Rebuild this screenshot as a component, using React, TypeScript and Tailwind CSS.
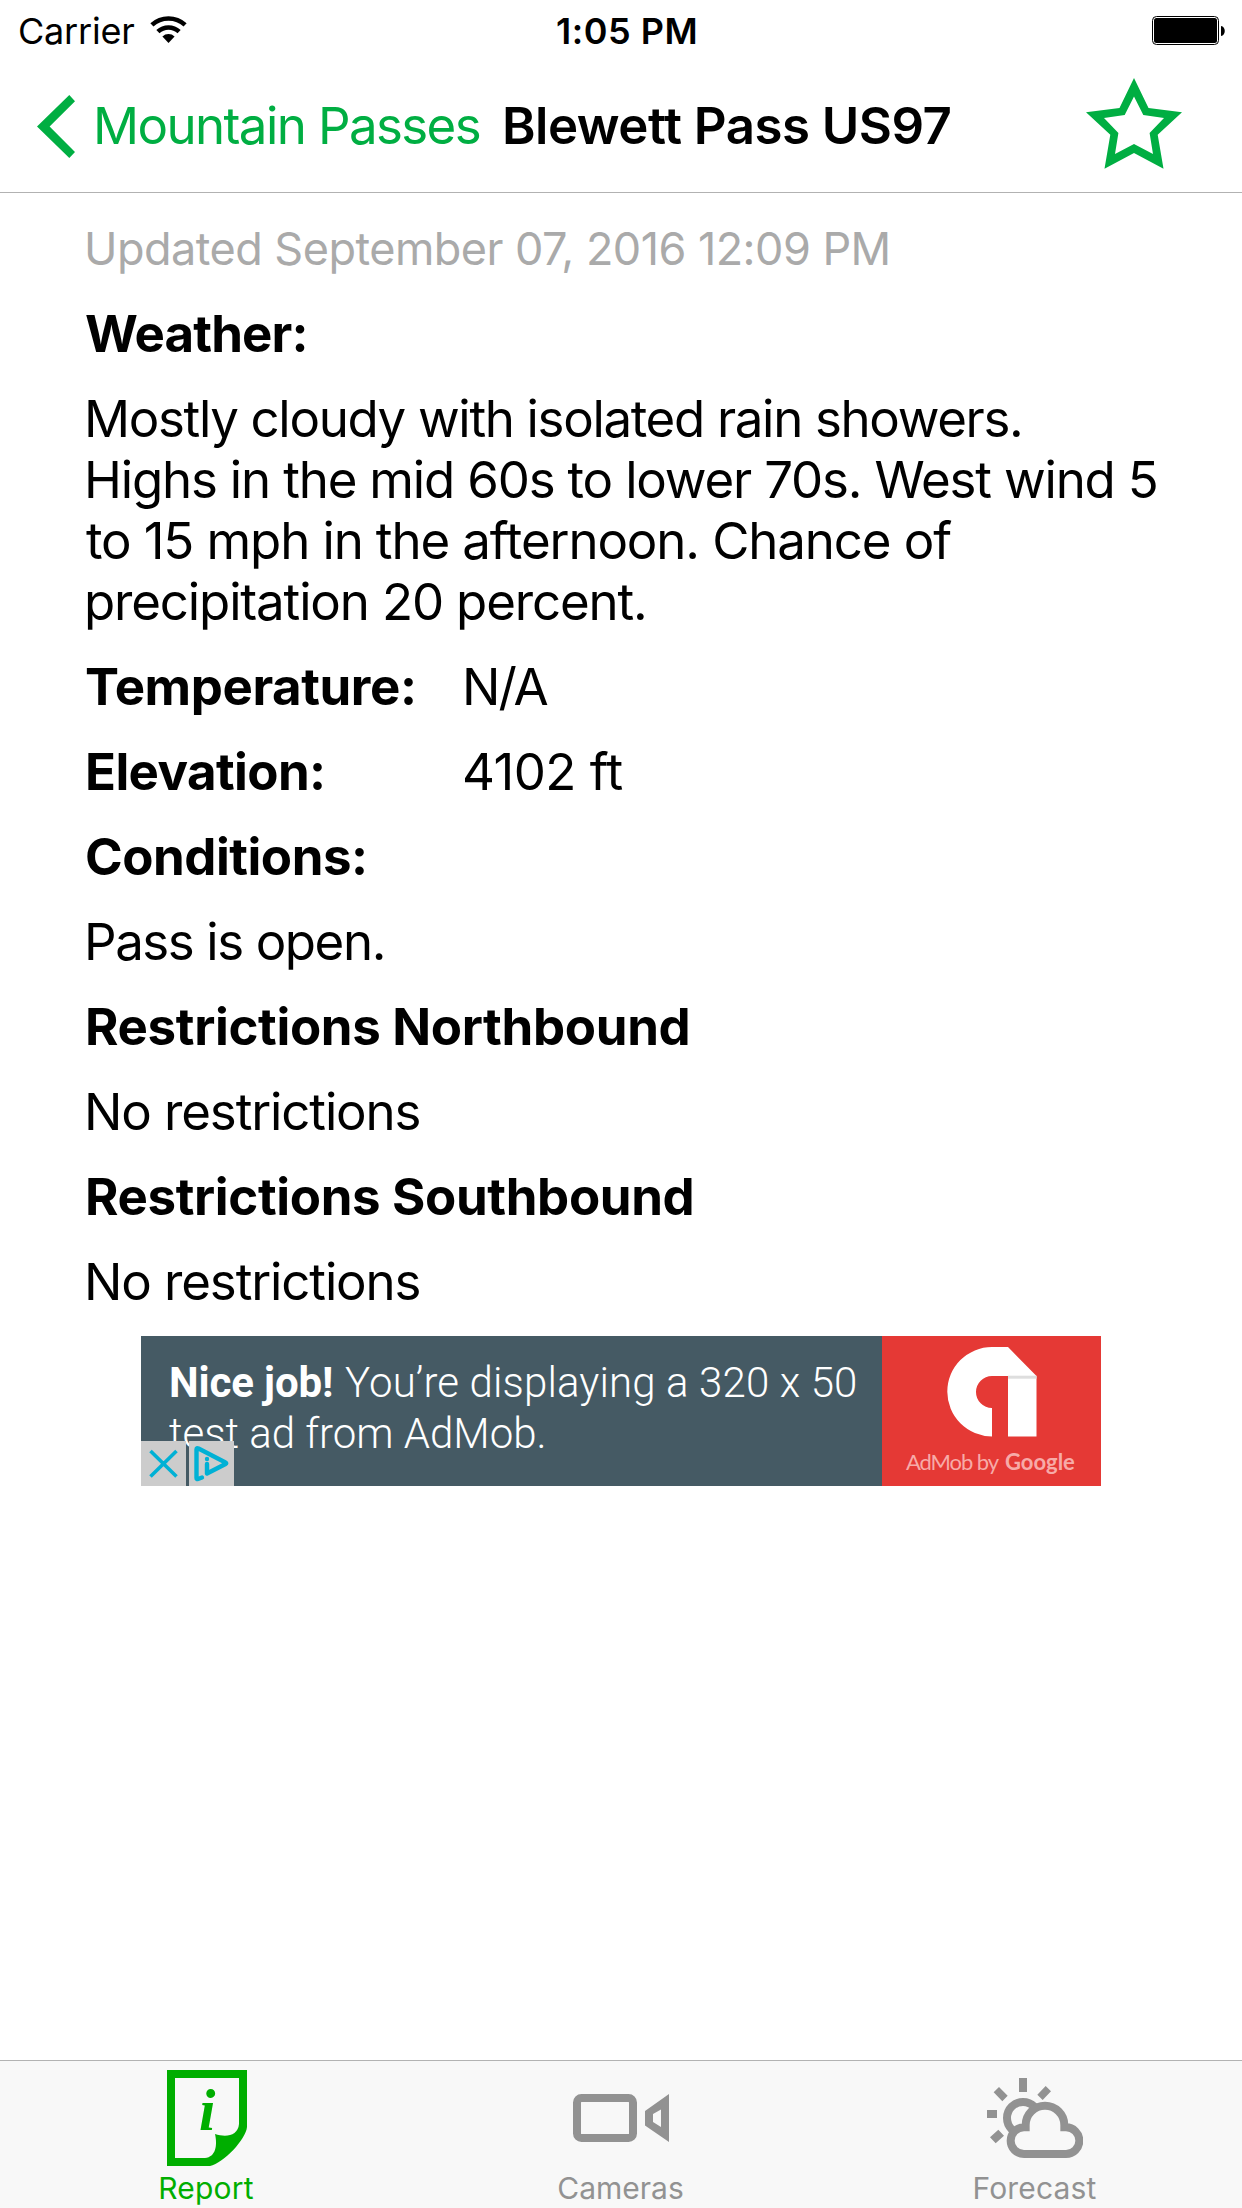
import type { ReactNode } from "react";

function WifiIcon() {
  return (
    <svg className="mt-4 h-[27px] w-[37px]" viewBox="0 0 37 27" fill="none" stroke="#000" strokeWidth="4.6">
      <path d="M1.9 8.9A24.6 24.6 0 0 1 35.1 8.9" />
      <path d="M7.9 15.6A15.6 15.6 0 0 1 29.1 15.6" />
      <path d="M18.5 27L12.4 20.4A9 9 0 0 1 24.6 20.4Z" fill="#000" stroke="none" />
    </svg>
  );
}

function StatusBar() {
  return (
    <div className="flex h-[62px] text-[36px] leading-[62px]">
      <div className="flex w-[556px] pl-[18px]">
        <span className="w-[132px] tracking-[-0.2px]">Carrier</span>
        <WifiIcon />
      </div>
      <span className="w-[596px] font-semibold tracking-[0.5px]">1:05 PM</span>
      <svg className="mt-4 h-[29px] w-[74px]" viewBox="0 0 74 29">
        <rect x="0.5" y="0.5" width="66" height="28" rx="4" fill="none" stroke="#000" />
        <rect x="2" y="2" width="63" height="25" rx="2.5" />
        <path d="M69 10C74 10.500 74 19.500 69 20Z" />
      </svg>
    </div>
  );
}

function NavBar() {
  return (
    <div className="flex h-[131px] border-b border-[#b2b2b2] text-[51px] leading-[127px] whitespace-nowrap">
      <svg className="mt-[33px] ml-[37px] h-[63px] w-[38px]" viewBox="0 0 38 63" fill="#00ae42">
        <path d="M32.300 0L38 6.200L12.600 31.500L38 57L32.300 63L0 31.500Z" />
      </svg>
      <span className="ml-[18px] w-[409px] tracking-[-1.6px] text-[#00ae42]">Mountain Passes</span>
      <span className="w-[584px] font-semibold tracking-[-0.51px]">Blewett Pass US97</span>
      <svg className="mt-4 h-[91px] w-[96px]" viewBox="1086 78 96 91">
        <path
          fill="#00ae42"
          fillRule="evenodd"
          d="M1134 78L1148.500 108L1182 112.300L1157.700 134.700L1163.500 168.700L1134 153L1104.500 168.700L1110.300 134.700L1086 112.300L1119.500 108ZM1134 96.500L1124.700 115L1104 118L1118.400 133L1115 154L1134 144L1153 154L1149.600 133L1164 118L1143.300 115Z"
        />
      </svg>
    </div>
  );
}

function Row({ children }: { children: ReactNode }) {
  return <div className="flex h-[85px] text-[51px] leading-[85px] whitespace-nowrap">{children}</div>;
}

function Report() {
  return (
    <section className="pl-[85px]">
      <p className="-ml-px h-[98px] pt-[13px] text-[45px] leading-[86px] tracking-[-0.53px] text-[#aaa]">
        Updated September 07, 2016 12:09 PM
      </p>
      <Row>
        <b className="tracking-[-0.87px]">Weather:</b>
      </Row>
      <p className="my-3 -ml-px text-[51px] leading-[61px] whitespace-nowrap">
        <span className="block tracking-[-1.33px]">Mostly cloudy with isolated rain showers.</span>
        <span className="block tracking-[-1.18px]">Highs in the mid 60s to lower 70s. West wind 5</span>
        <span className="ml-[2px] block tracking-[-1.12px]">to 15 mph in the afternoon. Chance of</span>
        <span className="block tracking-[-1.15px]">precipitation 20 percent.</span>
      </p>
      <Row>
        <b className="w-[377px] tracking-[-0.42px]">Temperature:</b>
        <span className="tracking-[-2px]">N/A</span>
      </Row>
      <Row>
        <b className="w-[377px] tracking-[-0.6px]">Elevation:</b>
        <span className="tracking-[-0.5px]">4102 ft</span>
      </Row>
      <Row>
        <b className="tracking-[-0.48px]">Conditions:</b>
      </Row>
      <Row>
        <span className="-ml-px tracking-[-1.42px]">Pass is open.</span>
      </Row>
      <Row>
        <b className="tracking-[-0.34px]">Restrictions Northbound</b>
      </Row>
      <Row>
        <span className="-ml-px tracking-[-1.12px]">No restrictions</span>
      </Row>
      <Row>
        <b className="tracking-[-0.36px]">Restrictions Southbound</b>
      </Row>
      <Row>
        <span className="-ml-px tracking-[-1.12px]">No restrictions</span>
      </Row>
    </section>
  );
}

function AdBanner() {
  return (
    <aside className="relative mx-[141px] mt-3 flex h-[150px] w-[960px] bg-[#455a64] font-[Roboto,sans-serif]">
      <div className="w-[741px] pt-[21px] pl-[28px] text-[42px] leading-[51px] font-light whitespace-nowrap text-white">
        <div className="flex">
          <b className="w-[176px] font-bold tracking-[-0.13px]">Nice job!</b>
          <span className="tracking-[0.13px]">You’re displaying a 320 x 50</span>
        </div>
        <div className="tracking-[-0.02px]">test ad from AdMob.</div>
      </div>
      <div className="w-[219px] bg-[#e53935]">
        <svg className="mt-[11px] ml-16 h-[90px] w-[91px]" viewBox="0 0 91 90">
          <path
            fill="#fff"
            d="M62 0H46A44.700 44.700 0 0 0 46 89.400V61A16 16 0 0 1 46 29H62V89.400H90.500V29Z"
          />
          <rect x="62" y="28.700" width="28.500" height="3" fill="#dedede" />
        </svg>
        <div className="mt-[9px] ml-6 flex font-[Lato,sans-serif] text-[22px] leading-[31px] whitespace-nowrap text-[#f7aba8]">
          <span className="w-[99px] tracking-[-1.1px]">AdMob by</span>
          <b>Google</b>
        </div>
      </div>
      <div className="absolute bottom-0 left-0 flex gap-[3px]">
        <svg className="size-[45px] bg-[#ccc]" viewBox="0 0 45 45" fill="none" stroke="#00b1d5" strokeWidth="3.6">
          <path d="M9.500 10L35.500 35.500M35.500 10L9.500 35.500" />
        </svg>
        <svg
          className="size-[45px] bg-[#ccc]"
          viewBox="0 0 45 45"
          fill="none"
          stroke="#00b1d5"
          strokeWidth="4.4"
          strokeLinecap="round"
          strokeLinejoin="round"
        >
          <path d="M13 36.500L9 38Q7.500 38.500 7.500 37V8.500Q7.500 6.500 9.500 7.500L36.500 21.500Q38 22.200 36.500 23L18 32.500V23" />
          <circle cx="18" cy="18" r="2.2" fill="#00b1d5" stroke="none" />
        </svg>
      </div>
    </aside>
  );
}

function TabBar() {
  return (
    <nav className="grid h-[148px] grid-cols-3 border-t border-[#b2b2b2] bg-[#f8f8f8] pt-[9px] text-center text-[30px] leading-[36px] text-[#929292]">
      <div className="flex flex-col items-center text-[#00ae00]">
        <svg className="h-24 w-20" viewBox="0 0 80 96" fill="#00ae00">
          <path
            fillRule="evenodd"
            d="M0 0H80V57C79 69 57 93 43 96H0ZM8 8V88H38C49 87 50.500 75 48 64C59 67.500 71 66 72 54V8Z"
          />
          <text x="32" y="59.500" fontSize="59" fontWeight="700" fontStyle="italic" fontFamily="Liberation Serif, serif">
            i
          </text>
        </svg>
        <span className="mt-1 mr-[2px] tracking-[0.2px]">Report</span>
      </div>
      <div className="flex flex-col items-center">
        <svg className="h-24 w-24" viewBox="0 0 96 96" fill="none" stroke="#929292">
          <rect x="4" y="28" width="56" height="40" rx="4.500" strokeWidth="8" />
          <path d="M96 24V72L72 55.500V41ZM88 39.500L80 44V52L88 57Z" fill="#929292" fillRule="evenodd" stroke="none" />
        </svg>
        <span className="mt-1 mr-px">Cameras</span>
      </div>
      <div className="flex flex-col items-center">
        <svg className="h-24 w-24" viewBox="111 60 288 288" fill="none" stroke="#929292" strokeWidth="24">
          <path
            stroke="none"
            fill="#929292"
            d="M207 84H231V126H207ZM111 180H141V204H111ZM131 127L147 111L173 137L157 154ZM287 108L303 124L278 150L262 134ZM145 239L162 257L137 280L120 262Z"
          />
          <circle cx="219" cy="204" r="48" />
          <path
            d="M222 312A40 40 0 0 1 222 232H227V225A58 58 0 0 1 343 225V232H348A40 40 0 0 1 348 312Z"
            fill="#f8f8f8"
          />
        </svg>
        <span className="mt-1 mr-px tracking-[0.16px]">Forecast</span>
      </div>
    </nav>
  );
}

export default function App() {
  return (
    <main className="flex h-[2208px] w-[1242px] flex-col bg-white font-[Inter,sans-serif] text-black">
      <StatusBar />
      <NavBar />
      <Report />
      <AdBanner />
      <div className="flex-1" />
      <TabBar />
    </main>
  );
}
